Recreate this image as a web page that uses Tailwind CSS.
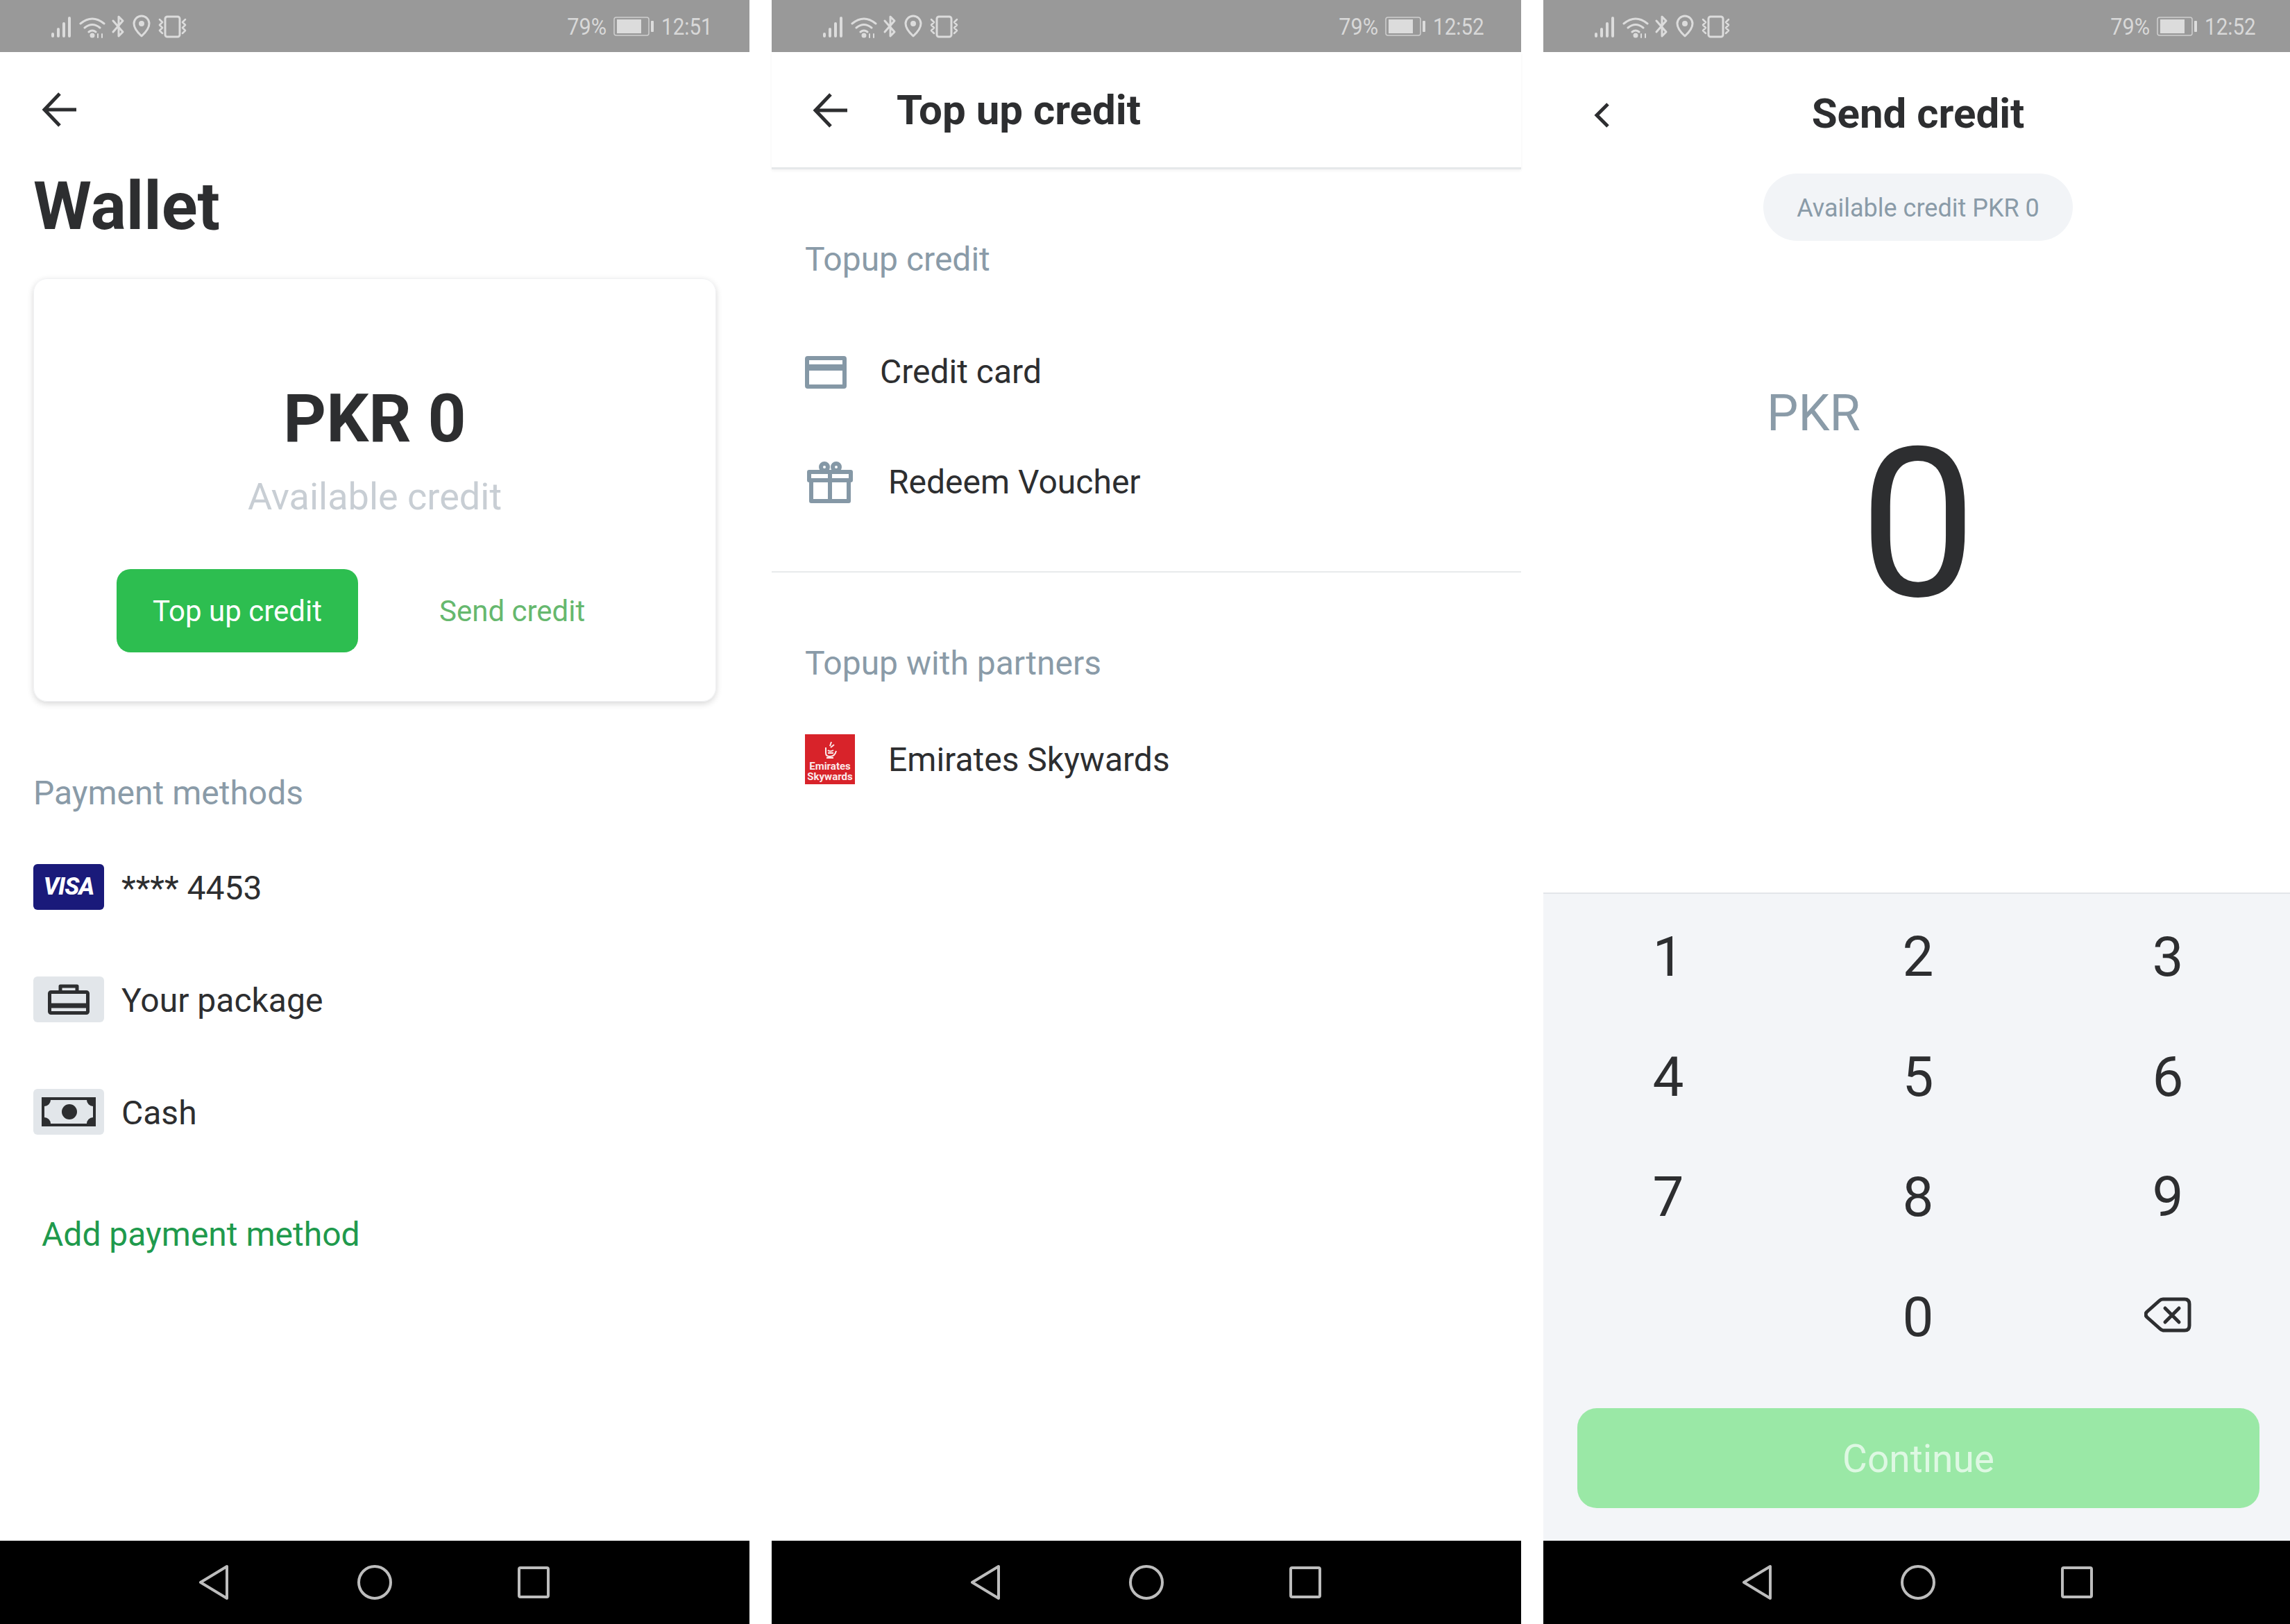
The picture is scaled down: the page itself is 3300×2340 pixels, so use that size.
<!doctype html>
<html>
<head>
<meta charset="utf-8">
<title>Wallet screens</title>
<script src="https://cdn.jsdelivr.net/npm/@tailwindcss/browser@4"></script>
</head>
<body class="bg-white">
<div class="flex gap-[32px] w-[3300px] h-[2340px] overflow-hidden font-[Roboto,sans-serif] text-[#2d2e30]">

  <!-- wallet -->
  <section class="flex flex-col w-[1080px] h-[2340px] shrink-0">
    <div class="flex items-center justify-between h-[75px] bg-[#999999] pl-[72px] pr-[53px] text-[#d8d8d8]">
      <svg width="202" height="36" viewBox="0 0 202 36" fill="none" stroke="#dcdcdc" stroke-width="3" stroke-linecap="round" stroke-linejoin="round">
        <g stroke-width="4"><path d="M4 32v-3M12 32V22M20 32V14M28 32V6"/></g>
        <path d="M44 14q17-14 34 0M50 20q11-9 22 0M56 26q5-4 10 0"/><circle cx="61" cy="31" r="2" fill="#dcdcdc"/><path d="M69 29v5M75 29v5" stroke-width="2"/>
        <path d="M91 10l14 16-6 6V4l6 6-14 16"/>
        <path d="M132 32q-11-10-11-18a11 11 0 0 1 22 0q0 8-11 18z"/><circle cx="132" cy="14" r="2.5" fill="#dcdcdc"/>
        <rect x="166" y="4" width="21" height="29" rx="3"/><path d="M158 8l4 4-4 4 4 4-4 4 4 4M195 8l-4 4 4 4-4 4 4 4-4 4" stroke-width="2.5"/>
      </svg>
      <div class="flex items-center text-[34px] leading-none">
        <span class="origin-right scale-x-[.9]">79%</span>
        <svg class="ml-[10px]" width="58" height="28" viewBox="0 0 58 28" fill="none"><rect x="1" y="1" width="50" height="26" rx="3" stroke="#cfcfcf" stroke-width="1.5"/><rect x="5" y="4" width="35" height="20" fill="#dcdcdc"/><rect x="54" y="6" width="4" height="16" rx="1" fill="#dcdcdc"/></svg>
        <span class="origin-right scale-x-[.87]">12:51</span>
      </div>
    </div>

    <div class="flex-1 flex flex-col px-[48px]">
      <svg class="mt-[58px] ml-[12px]" width="50" height="50" viewBox="0 0 50 50" fill="none" stroke="#2d2e30" stroke-width="5"><path d="M26 2L4 25l22 23M4 25h46"/></svg>
      <h1 class="mt-[58px] text-[96px] leading-[112px] font-bold">Wallet</h1>
      <div class="mt-[48px] h-[610px] rounded-[20px] border border-[#f0f1f3] shadow-[0_3px_10px_rgba(0,0,0,0.16)] flex flex-col items-center">
        <div class="mt-[145px] text-[96px] leading-[112px] font-bold">PKR 0</div>
        <div class="mt-[25px] text-[54px] leading-[64px] text-[#c8ced4]">Available credit</div>
        <div class="mt-[72px] w-full flex items-center pl-[119px]">
          <div class="flex items-center justify-center w-[348px] h-[120px] rounded-[20px] bg-[#2dbe50] text-white text-[42px]">Top up credit</div>
          <div class="ml-[117px] text-[42px] text-[#66b86e]">Send credit</div>
        </div>
      </div>
      <h2 class="mt-[102px] text-[48px] leading-[60px] text-[#8a9ba8]">Payment methods</h2>
      <div class="mt-[72px] flex flex-col gap-[96px]">
        <div class="flex items-center gap-[25px] h-[66px]">
          <div class="flex items-center justify-center w-[102px] h-[66px] rounded-[6px] bg-[#1a1a7a] text-white text-[35px] font-extrabold italic font-[&quot;Open_Sans&quot;,sans-serif] tracking-[-1px]">VISA</div>
          <span class="pt-[3px] text-[48px]">**** 4453</span>
        </div>
        <div class="flex items-center gap-[25px] h-[66px]">
          <div class="flex items-center justify-center w-[102px] h-[66px] rounded-[6px] bg-[#e2e6ea]">
            <svg width="60" height="44" viewBox="0 0 60 44" fill="none" stroke="#2d2e30" stroke-width="5" stroke-linejoin="round"><rect x="2.5" y="11.5" width="55" height="30" rx="2"/><path d="M18 11V3h24v8"/><path d="M2 31h56" stroke-width="7"/></svg>
          </div>
          <span class="pt-[3px] text-[48px]">Your package</span>
        </div>
        <div class="flex items-center gap-[25px] h-[66px]">
          <div class="flex items-center justify-center w-[102px] h-[66px] rounded-[6px] bg-[#e2e6ea]">
            <svg width="78" height="42" viewBox="0 0 78 42"><path fill="#2d2e30" fill-rule="evenodd" d="M0 0h78v42H0zM4 13v16a9 9 0 0 1 9 9h52a9 9 0 0 1 9-9V13a9 9 0 0 1-9-9H13a9 9 0 0 1-9 9z"/><circle cx="40" cy="21" r="11" fill="#2d2e30"/></svg>
          </div>
          <span class="pt-[3px] text-[48px]">Cash</span>
        </div>
      </div>
      <div class="mt-[114px] ml-[12px] text-[48px] leading-[60px] text-[#1f9a4d]">Add payment method</div>
    </div>

    <div class="h-[120px] bg-black shrink-0">
      <svg width="1080" height="120" viewBox="0 0 1080 120" fill="none" stroke="#bdbdbd" stroke-width="4" stroke-linejoin="round"><path d="M327 37v46l-38-23z"/><circle cx="540" cy="60" r="23"/><rect x="748" y="39" width="42" height="42" rx="2"/></svg>
    </div>
  </section>

  <!-- top up -->
  <section class="flex flex-col w-[1080px] h-[2340px] shrink-0">
    <div class="flex items-center justify-between h-[75px] bg-[#999999] pl-[72px] pr-[53px] text-[#d8d8d8]">
      <svg width="202" height="36" viewBox="0 0 202 36" fill="none" stroke="#dcdcdc" stroke-width="3" stroke-linecap="round" stroke-linejoin="round">
        <g stroke-width="4"><path d="M4 32v-3M12 32V22M20 32V14M28 32V6"/></g>
        <path d="M44 14q17-14 34 0M50 20q11-9 22 0M56 26q5-4 10 0"/><circle cx="61" cy="31" r="2" fill="#dcdcdc"/><path d="M69 29v5M75 29v5" stroke-width="2"/>
        <path d="M91 10l14 16-6 6V4l6 6-14 16"/>
        <path d="M132 32q-11-10-11-18a11 11 0 0 1 22 0q0 8-11 18z"/><circle cx="132" cy="14" r="2.5" fill="#dcdcdc"/>
        <rect x="166" y="4" width="21" height="29" rx="3"/><path d="M158 8l4 4-4 4 4 4-4 4 4 4M195 8l-4 4 4 4-4 4 4 4-4 4" stroke-width="2.5"/>
      </svg>
      <div class="flex items-center text-[34px] leading-none">
        <span class="origin-right scale-x-[.9]">79%</span>
        <svg class="ml-[10px]" width="58" height="28" viewBox="0 0 58 28" fill="none"><rect x="1" y="1" width="50" height="26" rx="3" stroke="#cfcfcf" stroke-width="1.5"/><rect x="5" y="4" width="35" height="20" fill="#dcdcdc"/><rect x="54" y="6" width="4" height="16" rx="1" fill="#dcdcdc"/></svg>
        <span class="origin-right scale-x-[.87]">12:52</span>
      </div>
    </div>

    <div class="flex items-center h-[169px] shrink-0 pl-[59px] pt-[2px] border-b-[3px] border-[#e6e8ea] shadow-[0_2px_4px_rgba(0,0,0,0.05)]">
      <svg width="50" height="50" viewBox="0 0 50 50" fill="none" stroke="#2d2e30" stroke-width="5"><path d="M26 2L4 25l22 23M4 25h46"/></svg>
      <h1 class="ml-[71px] text-[60px] font-bold">Top up credit</h1>
    </div>

    <div class="flex-1 flex flex-col">
      <div class="px-[48px] border-b-[2px] border-[#e8eaec] h-[581px] flex flex-col">
        <h2 class="mt-[100px] text-[48px] leading-[60px] text-[#8a9ba8]">Topup credit</h2>
        <div class="mt-[102px] flex items-center h-[60px]">
          <svg width="60" height="47" viewBox="0 0 60 47"><path fill="#8598a6" fill-rule="evenodd" d="M4 0h52a4 4 0 0 1 4 4v39a4 4 0 0 1-4 4H4a4 4 0 0 1-4-4V4a4 4 0 0 1 4-4zM6 6v6h48V6zM6 21v20h48V21z"/></svg>
          <span class="ml-[48px] text-[48px]">Credit card</span>
        </div>
        <div class="mt-[99px] flex items-center h-[60px]">
          <svg class="ml-[3px]" width="66" height="60" viewBox="0 0 66 60" fill="none" stroke="#8598a6" stroke-width="6" stroke-linejoin="round"><path d="M3 15h60v12H3zM6 27h54v30H6zM33 15v42"/><circle cx="25" cy="8" r="5"/><circle cx="42" cy="8" r="5"/></svg>
          <span class="ml-[51px] text-[48px]">Redeem Voucher</span>
        </div>
      </div>
      <div class="px-[48px] flex flex-col">
        <h2 class="mt-[101px] text-[48px] leading-[60px] text-[#8a9ba8]">Topup with partners</h2>
        <div class="mt-[72px] flex items-center h-[72px]">
          <div class="flex flex-col items-center justify-end w-[72px] h-[72px] bg-[#d8232a] text-[#fbeaea] font-[&quot;Liberation_Serif&quot;,serif] text-[15px] leading-[15px] pb-[3px]">
            <svg width="24" height="30" viewBox="0 0 24 28" fill="none" stroke="#fbeaea" stroke-width="2"><path d="M14 1l-2 6M18 5l-5 4M6 9v8q0 5 6 5 7 0 9-8M9 13q3 3 8 0M9 17h8M7 24h10"/></svg>
            <span class="font-bold">Emirates</span>
            <span class="font-bold">Skywards</span>
          </div>
          <span class="ml-[48px] pt-[2px] text-[48px]">Emirates Skywards</span>
        </div>
      </div>
    </div>

    <div class="h-[120px] bg-black shrink-0">
      <svg width="1080" height="120" viewBox="0 0 1080 120" fill="none" stroke="#bdbdbd" stroke-width="4" stroke-linejoin="round"><path d="M327 37v46l-38-23z"/><circle cx="540" cy="60" r="23"/><rect x="748" y="39" width="42" height="42" rx="2"/></svg>
    </div>
  </section>

  <!-- send credit -->
  <section class="flex flex-col w-[1080px] h-[2340px] shrink-0">
    <div class="flex items-center justify-between h-[75px] bg-[#999999] pl-[72px] pr-[53px] text-[#d8d8d8]">
      <svg width="202" height="36" viewBox="0 0 202 36" fill="none" stroke="#dcdcdc" stroke-width="3" stroke-linecap="round" stroke-linejoin="round">
        <g stroke-width="4"><path d="M4 32v-3M12 32V22M20 32V14M28 32V6"/></g>
        <path d="M44 14q17-14 34 0M50 20q11-9 22 0M56 26q5-4 10 0"/><circle cx="61" cy="31" r="2" fill="#dcdcdc"/><path d="M69 29v5M75 29v5" stroke-width="2"/>
        <path d="M91 10l14 16-6 6V4l6 6-14 16"/>
        <path d="M132 32q-11-10-11-18a11 11 0 0 1 22 0q0 8-11 18z"/><circle cx="132" cy="14" r="2.5" fill="#dcdcdc"/>
        <rect x="166" y="4" width="21" height="29" rx="3"/><path d="M158 8l4 4-4 4 4 4-4 4 4 4M195 8l-4 4 4 4-4 4 4 4-4 4" stroke-width="2.5"/>
      </svg>
      <div class="flex items-center text-[34px] leading-none">
        <span class="origin-right scale-x-[.9]">79%</span>
        <svg class="ml-[10px]" width="58" height="28" viewBox="0 0 58 28" fill="none"><rect x="1" y="1" width="50" height="26" rx="3" stroke="#cfcfcf" stroke-width="1.5"/><rect x="5" y="4" width="35" height="20" fill="#dcdcdc"/><rect x="54" y="6" width="4" height="16" rx="1" fill="#dcdcdc"/></svg>
        <span class="origin-right scale-x-[.87]">12:52</span>
      </div>
    </div>

    <div class="flex-1 flex flex-col items-center">
      <div class="relative w-full h-[175px] pt-[2px] flex items-center justify-center">
        <svg class="absolute left-[72px] top-[72px]" width="24" height="38" viewBox="0 0 24 38" fill="none" stroke="#2d2e30" stroke-width="5"><path d="M21 3L5 19l16 16"/></svg>
        <h1 class="text-[60px] font-bold">Send credit</h1>
      </div>
      <div class="flex items-center justify-center w-[446px] h-[97px] pt-[2px] rounded-full bg-[#f2f4f7] text-[36px] text-[#8a9ba8]">Available credit PKR 0</div>
      <div class="relative w-full flex-1">
        <span class="absolute left-[322px] top-[207px] text-[72px] leading-[84px] text-[#8a9ba8]">PKR</span>
        <span class="absolute left-0 right-0 top-[239px] text-center text-[300px] leading-[340px]">0</span>
      </div>
    </div>

    <div class="h-[934px] bg-[#f3f5f8] border-t-[2px] border-[#e3e6e9] flex flex-col shrink-0 pt-[4px]">
      <div class="grid grid-cols-3 auto-rows-[173px] text-[80px]">
        <div class="flex items-center justify-center">1</div>
        <div class="flex items-center justify-center">2</div>
        <div class="flex items-center justify-center">3</div>
        <div class="flex items-center justify-center">4</div>
        <div class="flex items-center justify-center">5</div>
        <div class="flex items-center justify-center">6</div>
        <div class="flex items-center justify-center">7</div>
        <div class="flex items-center justify-center">8</div>
        <div class="flex items-center justify-center">9</div>
        <div></div>
        <div class="flex items-center justify-center">0</div>
        <div class="flex items-center justify-center pb-[6px]">
          <svg width="68" height="51" viewBox="0 0 68 51" fill="none" stroke="#2d2e30" stroke-width="5" stroke-linecap="round" stroke-linejoin="round"><path d="M58 3H27q-3 0-5 2L4 21q-4 4 0 8l18 16q2 2 5 3h31q7 0 7-7V10q0-7-7-7z"/><path d="M30 16l20 20M50 16L30 36"/></svg>
        </div>
      </div>
      <div class="mt-[45px] ml-[49px] w-[983px] h-[144px] rounded-[28px] bg-[#9ae8a6] pt-[2px] flex items-center justify-center text-[55px] text-[#def8e3]">Continue</div>
    </div>

    <div class="h-[120px] bg-black shrink-0">
      <svg width="1080" height="120" viewBox="0 0 1080 120" fill="none" stroke="#bdbdbd" stroke-width="4" stroke-linejoin="round"><path d="M327 37v46l-38-23z"/><circle cx="540" cy="60" r="23"/><rect x="748" y="39" width="42" height="42" rx="2"/></svg>
    </div>
  </section>
</div>
</body>
</html>
